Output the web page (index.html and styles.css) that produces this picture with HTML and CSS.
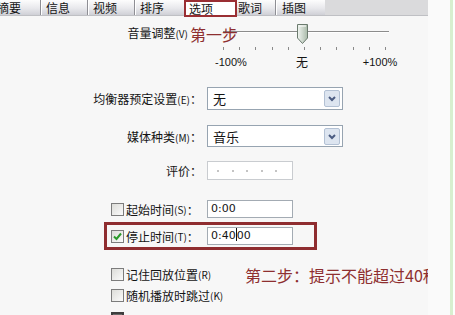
FILE: index.html
```html
<!DOCTYPE html>
<html>
<head>
<meta charset="utf-8">
<link rel="stylesheet" href="styles.css">
</head>
<body>
<div class="panel">
  <div class="tabs">
    <div class="tab t1"><span class="cut">摘要</span></div>
    <div class="tab t2">信息</div>
    <div class="tab t3">视频</div>
    <div class="tab t4">排序</div>
    <div class="tab sel">选项</div>
    <div class="tab t6">歌词</div>
    <div class="tab t7">插图</div>
    <div class="tab-fill"></div>
  </div>

  <div class="vol">
    <div class="vol-label">音量调整<span class="k">(V)</span></div>
    <div class="slider">
      <div class="track"></div>
      <svg class="thumb" viewBox="0 0 11 20">
        <defs>
          <linearGradient id="tg" x1="0" y1="0" x2="1" y2="0">
            <stop offset="0" stop-color="#f2f6f2"/>
            <stop offset="1" stop-color="#a9baa9"/>
          </linearGradient>
        </defs>
        <path d="M0.5 0.5 H10.5 V14 L5.5 19.5 L0.5 14 Z" fill="url(#tg)" stroke="#6b7b6e"/>
        <path d="M2 2 H9" stroke="#ffffff" stroke-width="1"/>
      </svg>
      <div class="ticks"><i></i><i></i><i></i><i></i><i></i><i></i><i></i><i></i><i></i><i></i><i></i></div>
      <div class="scale"><span class="s1">-100%</span><span class="s2">无</span><span class="s3">+100%</span></div>
    </div>
    <div class="note note1">第一步</div>
  </div>

  <div class="frow eq">
    <div class="flabel">均衡器预定设置<span class="k">(E)</span>：</div>
    <div class="combo"><span>无</span>
      <svg class="arrow" viewBox="0 0 16 17"><rect x="0.5" y="0.5" width="15" height="16" rx="1.5" fill="#dde5f0" stroke="#b3c1d4"/><path d="M5 7 L8 10 L11 7" fill="none" stroke="#4b5c82" stroke-width="2"/></svg>
    </div>
  </div>

  <div class="frow media">
    <div class="flabel">媒体种类<span class="k">(M)</span>：</div>
    <div class="combo"><span>音乐</span>
      <svg class="arrow" viewBox="0 0 16 17"><rect x="0.5" y="0.5" width="15" height="16" rx="1.5" fill="#dde5f0" stroke="#b3c1d4"/><path d="M5 7 L8 10 L11 7" fill="none" stroke="#4b5c82" stroke-width="2"/></svg>
    </div>
  </div>

  <div class="frow rate">
    <div class="flabel">评价：</div>
    <div class="stars"><i></i><i></i><i></i><i></i><i></i></div>
  </div>

  <div class="crow start">
    <div class="cl"><span class="cb"></span>起始时间<span class="k">(S)</span>：</div>
    <div class="field">0:00</div>
  </div>

  <div class="stop">
    <div class="cl"><span class="cb on"><svg viewBox="0 0 11 11"><path d="M2 5.5 L4.5 8 L9 2.5" fill="none" stroke="#2a9a2a" stroke-width="2"/></svg></span>停止时间<span class="k">(T)</span>：</div>
    <div class="field">0:40<span class="caret"></span>00</div>
  </div>

  <div class="opt remember">
    <div class="opt-label"><span class="cb"></span>记住回放位置<span class="k">(R)</span></div>
    <div class="note note2">第二步：提示不能超过40秒</div>
  </div>

  <div class="opt random">
    <div class="opt-label"><span class="cb"></span>随机播放时跳过<span class="k">(K)</span></div>
  </div>

  <div class="opt last">
    <div class="opt-label"><span class="cb dark"></span></div>
  </div>
</div>
<div class="margin-strip"></div>
<div class="green"></div>
<div class="tail"></div>
</body>
</html>
```

FILE: styles.css
```css
* { box-sizing: border-box; }
html, body { margin: 0; padding: 0; }
body {
  width: 455px;
  height: 315px;
  overflow: hidden;
  display: flex;
  background: #fff;
  font-family: "Noto Sans CJK SC", "Liberation Sans", sans-serif;
  font-size: 12px;
  color: #141414;
}
.panel {
  flex: none;
  width: 428px;
  height: 315px;
  overflow: hidden;
  background: #f7f7f7;
}
.margin-strip { flex: none; width: 22px; background: #fafafa; }
.green { flex: none; width: 3px; background: #d8efcf; }
.tail { flex: 1; background: #fdfffd; }

/* tabs */
.tabs {
  display: flex;
  align-items: flex-start;
  height: 16px;
  background: #dadadc;
  border-bottom: 1px solid #bfc0c4;
}
.tab {
  flex: none;
  height: 15px;
  line-height: 15px;
  font-size: 12px;
  white-space: nowrap;
  overflow: hidden;
  background: linear-gradient(#fdfdfd, #e8e8ec 55%, #cfd0d6);
  border-left: 1px solid #8e8e94;
  box-shadow: inset 1px 0 #fff;
  padding-left: 5px;
}
.t1 { width: 40px; border-left: 0; box-shadow: none; padding-left: 0; }
.t1 .cut { margin-left: -3px; }
.t2 { width: 47px; }
.t3 { width: 47px; }
.t4 { width: 50px; }
.sel {
  width: 53px;
  height: 17px;
  line-height: 13px;
  background: #fff;
  border: 2px solid #9a2e33;
  box-shadow: none;
  padding-left: 3px;
  position: relative;
}
.t6 { width: 38px; border-left: 0; box-shadow: none; padding-left: 1px; }
.t7 { width: 50px; padding-left: 6px; }
.tab-fill { flex: 1; height: 15px; }

.k { font-size: 10px; }

/* volume */
.vol {
  position: relative;
  display: flex;
  margin-top: 8px;
}
.vol-label {
  width: 188px;
  text-align: right;
  line-height: 18px;
  white-space: nowrap;
}
.slider {
  position: relative;
  margin-left: 35px;
  width: 163px;
}
.track {
  margin-top: 7px;
  width: 166px;
  height: 2px;
  border-top: 1px solid #8c8c8c;
  border-bottom: 1px solid #fff;
}
.thumb {
  position: absolute;
  left: 74px;
  top: 0;
  width: 11px;
  height: 20px;
}
.ticks {
  display: flex;
  justify-content: space-between;
  margin-top: 14px;
  height: 3px;
}
.ticks i { width: 1px; background: #8a8a8a; }
.scale {
  display: flex;
  margin-top: 4px;
  margin-left: -12px;
  font-family: "Liberation Sans", sans-serif;
  font-size: 11px;
  line-height: 16px;
}
.scale span { width: 40px; text-align: center; flex: none; }
.s2 { margin-left: 31px; font-family: "Noto Sans CJK SC", sans-serif; font-size: 12px; }
.s3 { margin-left: 38px; }

.note {
  color: #8e2f30;
  font-size: 16px;
  white-space: nowrap;
}
.note1 {
  position: absolute;
  left: 190px;
  top: 0;
  line-height: 20px;
}

/* form rows */
.frow {
  display: grid;
  grid-template-columns: 202px 136px;
  column-gap: 5px;
  align-items: center;
}
.flabel { text-align: right; white-space: nowrap; }
.eq { margin-top: 17px; }
.media { margin-top: 15px; }
.rate { margin-top: 14px; }
.combo {
  display: flex;
  align-items: center;
  justify-content: space-between;
  height: 23px;
  border: 1px solid #97a4b1;
  background: #fff;
  padding: 0 2px 0 5px;
  font-size: 13px;
}
.media .combo { height: 22px; }
.arrow { width: 16px; height: 17px; display: block; }
.stars {
  display: flex;
  align-items: center;
  width: 86px;
  height: 19px;
  border: 1px solid #c9ccd0;
  background: #fff;
  padding-left: 9px;
}
.stars i {
  width: 2px;
  height: 2px;
  background: #c4c4c4;
  margin-right: 12.5px;
}

/* checkbox rows */
.crow {
  display: grid;
  grid-template-columns: 202px 86px;
  column-gap: 5px;
  align-items: center;
}
.cl {
  display: flex;
  align-items: center;
  padding-left: 111px;
  white-space: nowrap;
}
.cb {
  flex: none;
  width: 13px;
  height: 13px;
  border: 1px solid #7c7c7c;
  background: linear-gradient(135deg, #dcdcd8, #fbfbfb);
  margin-right: 2px;
  display: flex;
  align-items: center;
  justify-content: center;
}
.cb svg { width: 11px; height: 11px; display: block; }
.cb.dark { border: 2px solid #3e3e3e; background: #6a6a6a; }
.field {
  height: 18px;
  border: 1px solid #a3abb3;
  background: #fff;
  font-family: "DejaVu Sans", sans-serif;
  font-size: 11px;
  padding-left: 3px;
  line-height: 16px;
  white-space: nowrap;
}
.caret {
  display: inline-block;
  width: 1px;
  height: 13px;
  background: #111;
  vertical-align: -2px;
}
.start { margin-top: 20px; }
.stop {
  margin-top: 4px;
  margin-left: 104px;
  width: 213px;
  height: 28px;
  border: 3px solid #8f2d30;
  display: grid;
  grid-template-columns: 95px 86px;
  column-gap: 5px;
  align-items: center;
}
.stop .cl { padding-left: 4px; }

.opt {
  display: flex;
  align-items: center;
  height: 21px;
  padding-left: 111px;
}
.opt-label {
  flex: none;
  width: 134px;
  display: flex;
  align-items: center;
  white-space: nowrap;
}
.remember { margin-top: 14px; }
.last { margin-top: 2px; }
```
